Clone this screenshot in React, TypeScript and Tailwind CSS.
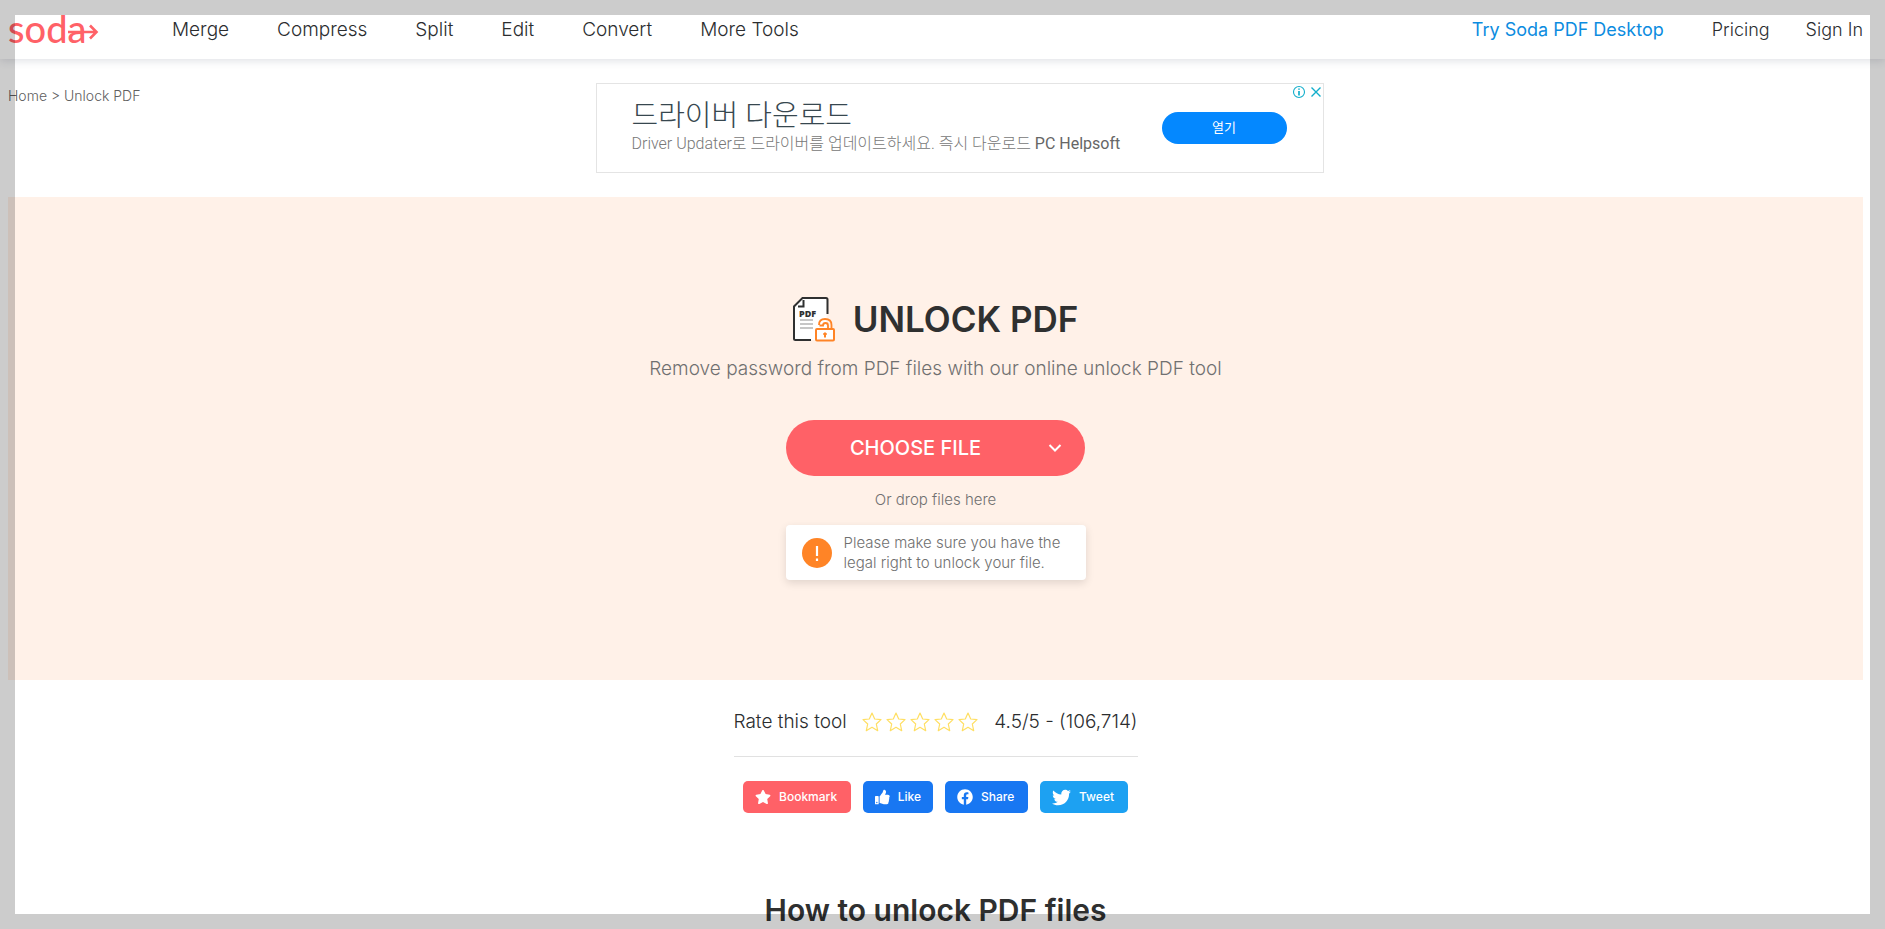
import React from "react";
import { FaFacebook, FaStar, FaThumbsUp, FaTwitter } from "react-icons/fa";

const tools = ["Merge", "Compress", "Split", "Edit", "Convert", "More Tools"];

function Logo() {
  return (
    <a href="#home" aria-label="Soda PDF" className="flex w-[91px] shrink-0 items-center pb-1 text-[#ff6167]">
      <span className="font-['Lato',sans-serif] text-[38px] leading-[52px] font-medium">soda</span>
      <svg width="32" height="18" viewBox="0 0 32 18" className="mt-[9px] -ml-[18px] shrink-0" fill="none" stroke="currentColor" strokeWidth="2.6">
        <path d="M0 9H29M22 2.500L28.500 9L22 15.500" />
      </svg>
    </a>
  );
}

function Header() {
  return (
    <header className="flex h-[59px] items-center pr-[22px] pl-2 text-lg font-light text-[#2b2d2f] shadow-[0_2px_8px_rgba(60,70,100,0.16)]">
      <Logo />
      <nav aria-label="Tools" className="ml-[73px] flex gap-12 text-[19px]">
        {tools.map((tool) => (
          <a key={tool} href="#tools">{tool}</a>
        ))}
      </nav>
      <nav aria-label="Account" className="ml-auto flex items-center">
        <a href="#desktop" className="mr-12 font-normal text-[#0c8ce0]">Try Soda PDF Desktop</a>
        <a href="#pricing" className="mr-9">Pricing</a>
        <a href="#signin">Sign In</a>
      </nav>
    </header>
  );
}

function Advert() {
  return (
    <aside className="relative flex h-[90px] w-[728px] items-center justify-between border border-[#e4e4e4] bg-white pr-[36px] pl-[35px] font-['Roboto','Noto_Sans_CJK_KR',sans-serif]">
      <div>
        <p className="text-[29px] leading-8 font-light text-[#37474f]">드라이버 다운로드</p>
        <p className="text-base leading-6 font-light text-[#777]">
          Driver Updater로 드라이버를 업데이트하세요. 즉시 다운로드 <span className="font-normal text-[#666]">PC Helpsoft</span>
        </p>
      </div>
      <button type="button" className="h-8 w-[125px] rounded-full bg-[#0488ff] text-[13px] text-white">열기</button>
      <div className="absolute top-px right-px flex gap-1 text-[#12aecb]">
        <svg width="14" height="14" viewBox="0 0 14 14" fill="none" stroke="currentColor">
          <circle cx="7" cy="7" r="5.5" strokeWidth="1.1" />
          <path d="M7 6v4.4M7 3.4v1.4" strokeWidth="1.7" />
        </svg>
        <svg width="12" height="14" viewBox="0 0 12 14" fill="none" stroke="currentColor" strokeWidth="1.4">
          <path d="M1.500 2.500l9 9M10.500 2.500l-9 9" />
        </svg>
      </div>
    </aside>
  );
}

function UnlockIcon() {
  return (
    <svg width="42" height="46" viewBox="0 0 42 46" fill="none" aria-hidden="true">
      <path d="M9 2H33.500V44H3.500C2 44 1 43 1 42V10z" fill="#fff" />
      <path d="M34.500 18V3.500Q34.500 2 33 2H9.500L1 10.500V42.500Q1 44 2.500 44H18" stroke="#2f3030" strokeWidth="2" />
      <path d="M10.500 4V10.500H5" stroke="#2f3030" strokeWidth="2" />
      <text x="6" y="20.500" fontSize="9" fontWeight="800" fontFamily="Open Sans, sans-serif" fill="#2f3030">PDF</text>
      <path d="M7 24H20M7 28H20M7 32H20" stroke="#b4b4b4" strokeWidth="1.700" />
      <rect x="23" y="33" width="18" height="11.500" rx="1" fill="#fff" stroke="#ff8426" strokeWidth="2" />
      <path d="M26 29Q26 23 32 23Q38.500 23 38.500 29V33M35 33V29.500Q35 27 32.500 27Q30 27 30 29.500H26.500" stroke="#ff8426" strokeWidth="1.800" />
      <path d="M32 36.500V41.500M30.300 38H33.700" stroke="#ff8426" strokeWidth="2" />
    </svg>
  );
}

function Hero() {
  return (
    <main className="mt-6 mr-[22px] ml-2 flex h-[483px] flex-col items-center bg-[#fff1e8] pt-[97px] text-[#707070]">
      <h1 className="flex items-center gap-[18px] text-[35px] leading-[50px] font-semibold text-[#2f3030]">
        <UnlockIcon />
        UNLOCK PDF
      </h1>
      <p className="mt-[11px] text-[19px] leading-7 font-light">Remove password from PDF files with our online unlock PDF tool</p>
      <div className="mt-[37px] flex h-14 w-[299px] rounded-full bg-[#ff6167] text-white">
        <button type="button" className="flex-1 pl-5 text-xl font-medium">CHOOSE FILE</button>
        <button type="button" aria-label="More sources" className="flex w-[60px] items-center">
          <svg width="14" height="10" viewBox="0 0 14 10" className="ml-[23px]" fill="none" stroke="currentColor" strokeWidth="2">
            <path d="M1.500 2L7 7.500L12.500 2" />
          </svg>
        </button>
      </div>
      <p className="mt-[14px] text-[15px] leading-5 font-light">Or drop files here</p>
      <div className="mt-[15px] flex h-[55px] w-[300px] items-center rounded bg-white pl-4 shadow-[0_3px_8px_rgba(0,0,0,0.12)]">
        <svg width="30" height="30" viewBox="0 0 30 30" aria-hidden="true">
          <circle cx="15" cy="15" r="15" fill="#ff8426" />
          <path d="M15 8V18M15 20.500V23" stroke="#fff" strokeWidth="2.200" />
        </svg>
        <p className="ml-3 text-[15px] leading-5 font-light">
          Please make sure you have the
          <br />
          legal right to unlock your file.
        </p>
      </div>
    </main>
  );
}

function RatingStar({ value }: { value: number }) {
  return (
    <button type="button" aria-label={`Rate ${value}`}>
      <svg width="20" height="20" viewBox="0 0 20 20" fill="none" stroke="#ffdf63" strokeWidth="1.200" strokeLinejoin="round">
        <path d="M10 1L12.700 7L19 7.600L14.300 12L15.700 18.700L10 15.300L4.300 18.700L5.700 12L1 7.600L7.300 7z" />
      </svg>
    </button>
  );
}

function Rating() {
  return (
    <section className="flex flex-col items-center pt-7 pr-[22px] pl-2">
      <div className="flex w-[404px] items-center justify-between border-b border-[#e1e1e1] pb-5 text-[19px] leading-7 font-light text-[#2b2d2f]">
        <span>Rate this tool</span>
        <div className="flex gap-1">
          {[1, 2, 3, 4, 5].map((n) => (
            <RatingStar key={n} value={n} />
          ))}
        </div>
        <span>4.5/5 - (106,714)</span>
      </div>
      <div className="mt-6 flex gap-3 text-xs font-medium text-white">
        <button type="button" className="flex h-8 w-[108px] items-center gap-2 rounded-[5px] bg-[#ff6167] px-3"><FaStar size={16} />Bookmark</button>
        <button type="button" className="flex h-8 w-[70px] items-center gap-2 rounded-[5px] bg-[#1877f2] px-3"><FaThumbsUp size={16} />Like</button>
        <button type="button" className="flex h-8 w-[83px] items-center gap-2 rounded-[5px] bg-[#1877f2] px-3"><FaFacebook size={16} />Share</button>
        <button type="button" className="flex h-8 w-[88px] items-center gap-2 rounded-[5px] bg-[#1da1f2] px-3"><FaTwitter size={19} />Tweet</button>
      </div>
      <h2 className="mt-[78px] text-[30px] leading-[38px] font-semibold text-[#2f3030]">How to unlock PDF files</h2>
    </section>
  );
}

export default function App() {
  return (
    <div className="relative h-screen overflow-hidden bg-white font-['Inter',sans-serif]">
      <Header />
      <div className="relative flex justify-center pt-6 pl-[34px]">
        <nav aria-label="Breadcrumb" className="absolute top-[27px] left-2 text-sm leading-5 font-light text-[#606060]">
          <a href="#home">Home</a> &gt; <a href="#unlock">Unlock PDF</a>
        </nav>
        <Advert />
      </div>
      <Hero />
      <Rating />
      <div className="pointer-events-none absolute inset-0 border-[15px] border-black/20" />
    </div>
  );
}
